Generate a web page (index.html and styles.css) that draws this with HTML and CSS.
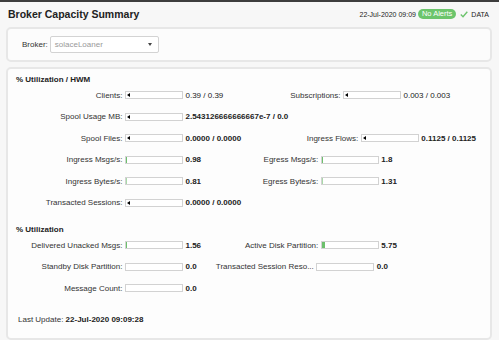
FILE: index.html
```html
<!DOCTYPE html>
<html lang="en">

<head>
    <meta charset="UTF-8">
    <meta name="viewport" content="width=device-width, initial-scale=1.0">
    <title>Broker Capacity Summary</title>
    <link rel="stylesheet" href="styles.css">
</head>

<body>
    <div class="topbar"></div>
    <header class="title-row">
        <h1>Broker Capacity Summary</h1>
        <div class="status">
            <span class="stamp">22-Jul-2020 09:09</span>
            <span class="pill">No Alerts</span>
            <svg class="check" width="8" height="7" viewBox="0 0 8 7">
                <path d="M0.8 3.6 L3 5.7 L7.3 0.8" fill="none" stroke="#6cc36c" stroke-width="1.4" />
            </svg>
            <span class="data">DATA</span>
        </div>
    </header>

    <div class="panel broker-panel">
        <span class="broker-label">Broker:</span>
        <div class="select">
            <span>solaceLoaner</span>
            <span class="caret"></span>
        </div>
    </div>

    <div class="panel main-panel">
        <section>
            <h2>% Utilization / HWM</h2>
            <div class="metrics">
                <div class="metric">
                    <span class="label">Clients:</span>
                    <span class="bar"><i class="hwm" style="left: 0%"></i></span>
                    <span class="value light">0.39 / 0.39</span>
                </div>
                <div class="metric">
                    <span class="label">Subscriptions:</span>
                    <span class="bar"><i class="hwm" style="left: 0%"></i></span>
                    <span class="value light">0.003 / 0.003</span>
                </div>
                <div class="metric">
                    <span class="label">Spool Usage MB:</span>
                    <span class="bar"><i class="hwm" style="left: 0%"></i></span>
                    <span class="value">2.543126666666667e-7 / 0.0</span>
                </div>
                <div class="metric">
                    <span class="label">Spool Files:</span>
                    <span class="bar"><i class="hwm" style="left: 0%"></i></span>
                    <span class="value">0.0000 / 0.0000</span>
                </div>
                <div class="metric">
                    <span class="label">Ingress Flows:</span>
                    <span class="bar"><i class="hwm" style="left: 0%"></i></span>
                    <span class="value">0.1125 / 0.1125</span>
                </div>
                <div class="metric">
                    <span class="label">Ingress Msgs/s:</span>
                    <span class="bar"><i class="fill" style="width: 0.98%"></i></span>
                    <span class="value">0.98</span>
                </div>
                <div class="metric">
                    <span class="label">Egress Msgs/s:</span>
                    <span class="bar"><i class="fill" style="width: 1.8%"></i></span>
                    <span class="value">1.8</span>
                </div>
                <div class="metric">
                    <span class="label">Ingress Bytes/s:</span>
                    <span class="bar"><i class="fill faint" style="width: 0.81%"></i></span>
                    <span class="value">0.81</span>
                </div>
                <div class="metric">
                    <span class="label">Egress Bytes/s:</span>
                    <span class="bar"><i class="fill faint" style="width: 1.31%"></i></span>
                    <span class="value">1.31</span>
                </div>
                <div class="metric">
                    <span class="label">Transacted Sessions:</span>
                    <span class="bar"><i class="hwm" style="left: 0%"></i></span>
                    <span class="value">0.0000 / 0.0000</span>
                </div>
            </div>
        </section>

        <section class="second">
            <h2>% Utilization</h2>
            <div class="metrics">
                <div class="metric">
                    <span class="label">Delivered Unacked Msgs:</span>
                    <span class="bar"><i class="fill" style="width: 1.56%"></i></span>
                    <span class="value">1.56</span>
                </div>
                <div class="metric">
                    <span class="label">Active Disk Partition:</span>
                    <span class="bar"><i class="fill" style="width: 5.75%"></i></span>
                    <span class="value">5.75</span>
                </div>
                <div class="metric">
                    <span class="label">Standby Disk Partition:</span>
                    <span class="bar"></span>
                    <span class="value">0.0</span>
                </div>
                <div class="metric">
                    <span class="label" title="Transacted Session Resource Utilization">Transacted Session Reso...</span>
                    <span class="bar"></span>
                    <span class="value">0.0</span>
                </div>
                <div class="metric">
                    <span class="label">Message Count:</span>
                    <span class="bar"></span>
                    <span class="value">0.0</span>
                </div>
            </div>
        </section>

        <p class="last-update">Last Update: <b>22-Jul-2020 09:09:28</b></p>
    </div>
</body>

</html>
```
FILE: styles.css
```css
html {
    font-family: 'Liberation Sans', Arial, sans-serif;
    font-size: 8px;
    color: #333;
}

body {
    margin: 0;
    background-color: #f7f7f7;
    width: 499px;
    height: 340px;
    overflow: hidden;
}

.topbar {
    height: 2px;
    background-color: #3d3d3d;
}

.title-row {
    height: 24px;
    padding: 0 10px 0 8px;
    display: flex;
    align-items: center;
    justify-content: space-between;
}

.title-row h1 {
    margin: 0;
    font-size: 10.5px;
    font-weight: bold;
    color: #222;
}

.status {
    display: flex;
    align-items: center;
    gap: 2px;
    font-size: 7px;
    color: #222;
}

.pill {
    background-color: #6cc56c;
    color: #fff;
    font-size: 7.5px;
    padding: 1px 4px;
    border-radius: 6px;
    line-height: 8px;
}

.check {
    margin: 0 1px 0 2px;
}

.panel {
    margin: 0 7px 0 6px;
    border: 2px solid #e7e7e7;
    border-radius: 5px;
    background-color: #fcfcfc;
}

.broker-panel {
    height: 31px;
    padding-left: 14px;
    display: flex;
    align-items: center;
    gap: 2px;
    margin-top: 1px;
}

.broker-label {
    color: #333;
}

.select {
    width: 97px;
    height: 15px;
    background-color: #fff;
    border: 1px solid #d3d3d3;
    border-radius: 2px;
    display: flex;
    align-items: center;
    justify-content: space-between;
    padding: 0 6px 0 4px;
    color: #999;
}

.caret {
    width: 0;
    height: 0;
    border-left: 2px solid transparent;
    border-right: 2px solid transparent;
    border-top: 3px solid #444;
}

.main-panel {
    margin-top: 5px;
    height: 263px;
    padding: 6px 4px 0;
    background-color: #fdfdfd;
}

.main-panel h2 {
    margin: 0 0 3.5px;
    padding-left: 4px;
    font-size: 8px;
    line-height: 10px;
    color: #222;
}

.second {
    margin-top: 16px;
}

.metrics {
    display: flex;
    flex-wrap: wrap;
    row-gap: 8.5px;
}

.metric {
    height: 13px;
    display: flex;
    align-items: center;
    margin-right: 6.7px;
}

.label {
    width: 110.5px;
    padding-left: 6px;
    box-sizing: border-box;
    text-align: right;
    white-space: nowrap;
    color: #333;
}

.bar {
    position: relative;
    width: 58px;
    height: 8px;
    box-sizing: border-box;
    margin: 0 2.5px;
    border: 1px solid #d2d2d2;
    background-color: #fff;
}

.bar .fill {
    position: absolute;
    left: 0;
    top: 0;
    bottom: 0;
    min-width: 1px;
    background-color: #6cc06c;
}

.bar .fill.faint {
    background-color: #a8d9a8;
}

.bar .hwm {
    position: absolute;
    top: 1px;
    margin-left: 1px;
    width: 0;
    height: 0;
    border-top: 2px solid transparent;
    border-bottom: 2px solid transparent;
    border-right: 3px solid #000;
}

.value {
    font-weight: bold;
    color: #222;
    white-space: nowrap;
}

.value.light {
    font-weight: normal;
}

.last-update {
    margin: 20.5px 0 0 6px;
    line-height: 10px;
    color: #333;
}

.last-update b {
    color: #222;
}
```
